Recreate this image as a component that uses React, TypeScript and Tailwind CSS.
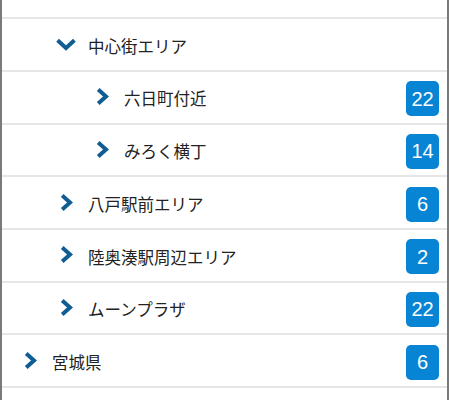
import React from "react";

type Row = { label: string; level: number; expanded?: boolean; count?: number };

const rows: Row[] = [
  { label: "青森県", level: 0, expanded: true },
  { label: "中心街エリア", level: 1, expanded: true },
  { label: "六日町付近", level: 2, count: 22 },
  { label: "みろく横丁", level: 2, count: 14 },
  { label: "八戸駅前エリア", level: 1, count: 6 },
  { label: "陸奥湊駅周辺エリア", level: 1, count: 2 },
  { label: "ムーンプラザ", level: 1, count: 22 },
  { label: "宮城県", level: 0, count: 6 },
  { label: "", level: 0, count: undefined },
];

const padClass = ["pl-[16px]", "pl-[52px]", "pl-[88px]"];

function ChevronRight() {
  return (
    <svg width="13" height="17" viewBox="0 0 13 17" className="block">
      <polyline points="2.2,1.6 10,8.5 2.2,15.4" fill="none" stroke="#0f5d92" strokeWidth="4" strokeLinejoin="miter" />
    </svg>
  );
}

function ChevronDown() {
  return (
    <svg width="20" height="13" viewBox="0 0 20 13" className="block">
      <polyline points="1.6,2.2 10,10 18.4,2.2" fill="none" stroke="#0f5d92" strokeWidth="4" strokeLinejoin="miter" />
    </svg>
  );
}

export default function App() {
  return (
    <div className="w-[449px] h-[400px] overflow-hidden bg-white border-x-2 border-[#7a7a7a] font-['Noto_Sans_CJK_JP','Noto_Sans',sans-serif]">
      <div className="-mt-[33.5px]">
        {rows.map((r, i) => (
          <div
            key={i}
            className={`flex items-center h-[52.7px] border-b-2 border-[#e6e6e6] pr-[8px] ${padClass[r.level]} ${i === 0 ? "pb-[4px]" : "pt-[3px]"}`}
          >
            {r.label !== "" && (
              <>
                <div className="w-[24px] flex justify-center -mt-[4px] shrink-0">
                  {r.expanded ? <ChevronDown /> : <ChevronRight />}
                </div>
                <div className="ml-[10px] flex-1 text-[16.5px] leading-none text-[#222]">{r.label}</div>
                {r.count !== undefined && (
                  <div className="w-[33px] h-[35px] rounded-[5px] bg-[#0784d3] flex items-center justify-center text-white text-[20px] font-['Liberation_Sans',sans-serif]">
                    {r.count}
                  </div>
                )}
              </>
            )}
          </div>
        ))}
      </div>
    </div>
  );
}
